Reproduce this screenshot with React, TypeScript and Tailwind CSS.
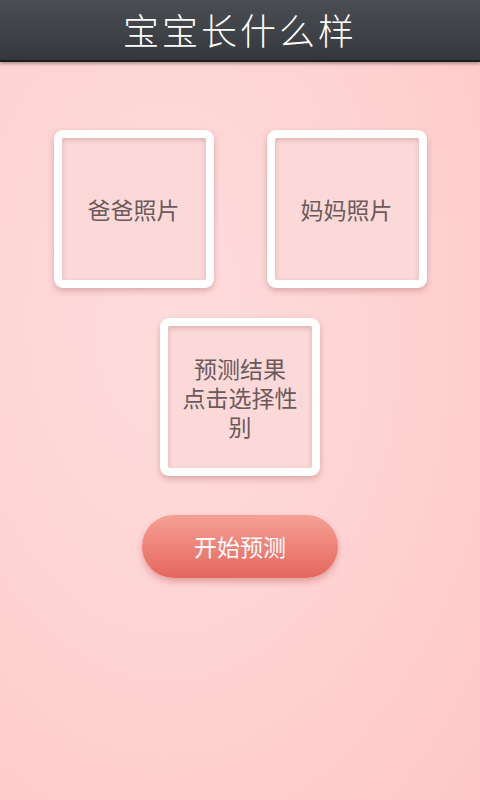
import React from "react";

const font = { fontFamily: '"Noto Sans CJK SC", "Noto Sans", sans-serif' };

const PhotoFrame = ({ children }: { children: React.ReactNode }) => (
  <div className="w-[160px] h-[158px] rounded-[9px] bg-white p-[8px] shadow-[0_3px_6px_rgba(160,80,80,0.35)]">
    <div className="flex h-full w-full items-center justify-center rounded-[2px] bg-[#fcd9d9] shadow-[inset_0_2px_5px_rgba(150,80,80,0.3)]">
      <div className="px-1 text-center text-[23px] leading-[29px] text-[#6a5a5c]">{children}</div>
    </div>
  </div>
);

export default function App() {
  return (
    <div
      className="flex h-[800px] w-[480px] flex-col overflow-hidden bg-[radial-gradient(ellipse_at_35%_40%,#fedcdc_0%,#fed4d4_45%,#ffc7c7_100%)]"
      style={font}
    >
      <div className="flex h-[62px] shrink-0 items-center justify-center border-b-2 border-[#1e1b1d] bg-gradient-to-b from-[#4a4d52] via-[#404347] to-[#34373b] shadow-[0_2px_3px_rgba(0,0,0,0.3)]">
        <span className="pb-[2px] text-[36px] font-light leading-none tracking-[3px] text-white">宝宝长什么样</span>
      </div>

      <div className="flex flex-col items-center pt-[68px]">
        <div className="flex gap-[53px]">
          <PhotoFrame>爸爸照片</PhotoFrame>
          <PhotoFrame>妈妈照片</PhotoFrame>
        </div>
        <div className="mt-[30px]">
          <PhotoFrame>
            预测结果
            <br />
            点击选择性
            <br />
            别
          </PhotoFrame>
        </div>
        <button className="mt-[39px] flex h-[63px] w-[196px] items-center justify-center rounded-full bg-gradient-to-b from-[#f4a096] via-[#ee8379] to-[#e4665f] text-[23px] text-white shadow-[0_4px_6px_rgba(180,70,70,0.35)]">
          开始预测
        </button>
      </div>
    </div>
  );
}
